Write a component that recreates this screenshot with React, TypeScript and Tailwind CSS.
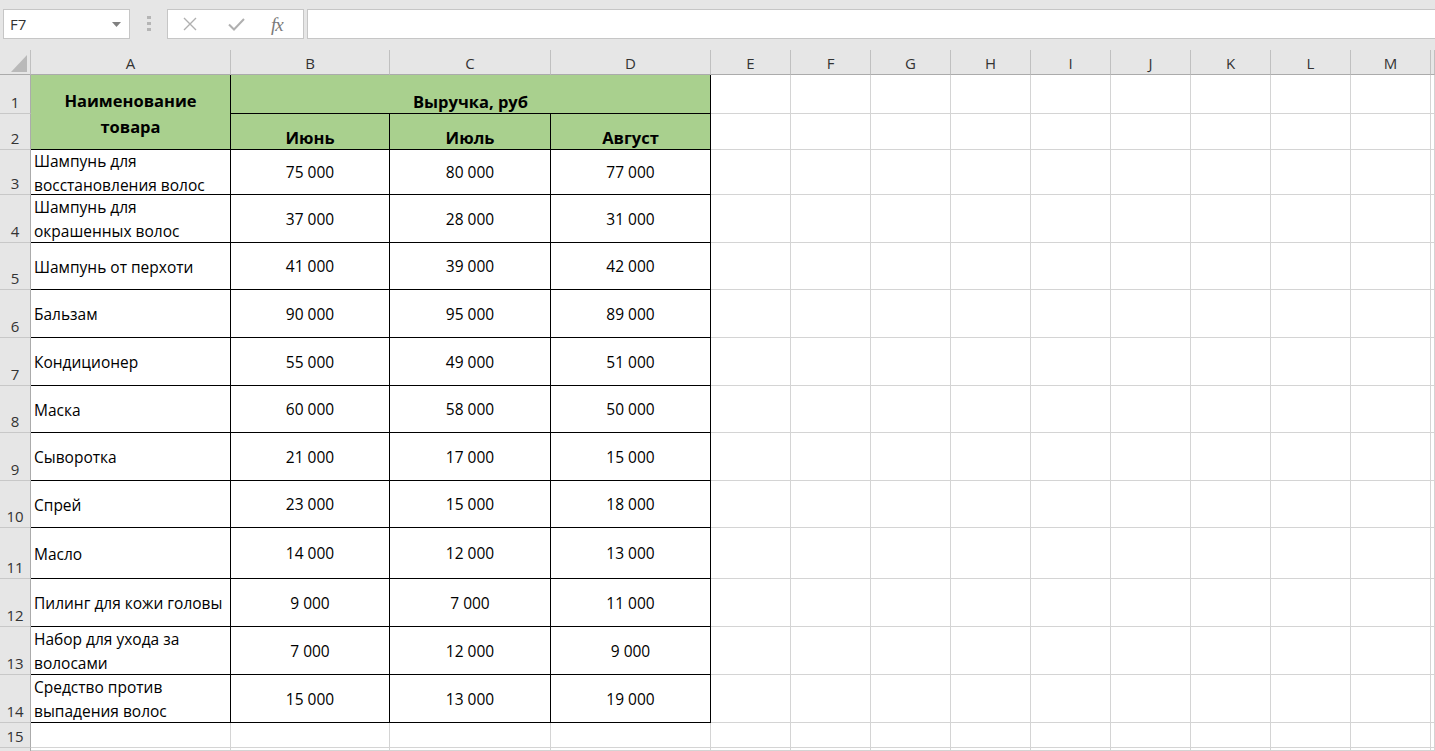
import React from "react";

const COL_LETTERS = ["A", "B", "C", "D", "E", "F", "G", "H", "I", "J", "K", "L", "M", ""];

const GRID = "border-r border-b border-[#d4d4d4]";
const TBL = "border-r border-b border-black";
const ROWHDR =
  "border-r border-b border-r-[#ababab] border-b-[#c8c8c8] bg-[#e6e6e6] flex items-end justify-center pb-[3px] text-[#333] text-[15px] leading-none";

type Row = { n: number; name: string[]; b: string; c: string; d: string };

const DATA: Row[] = [
  { n: 3, name: ["Шампунь для", "восстановления волос"], b: "75 000", c: "80 000", d: "77 000" },
  { n: 4, name: ["Шампунь для", "окрашенных волос"], b: "37 000", c: "28 000", d: "31 000" },
  { n: 5, name: ["Шампунь от перхоти"], b: "41 000", c: "39 000", d: "42 000" },
  { n: 6, name: ["Бальзам"], b: "90 000", c: "95 000", d: "89 000" },
  { n: 7, name: ["Кондиционер"], b: "55 000", c: "49 000", d: "51 000" },
  { n: 8, name: ["Маска"], b: "60 000", c: "58 000", d: "50 000" },
  { n: 9, name: ["Сыворотка"], b: "21 000", c: "17 000", d: "15 000" },
  { n: 10, name: ["Спрей"], b: "23 000", c: "15 000", d: "18 000" },
  { n: 11, name: ["Масло"], b: "14 000", c: "12 000", d: "13 000" },
  { n: 12, name: ["Пилинг для кожи головы"], b: "9 000", c: "7 000", d: "11 000" },
  { n: 13, name: ["Набор для ухода за", "волосами"], b: "7 000", c: "12 000", d: "9 000" },
  { n: 14, name: ["Средство против", "выпадения волос"], b: "15 000", c: "13 000", d: "19 000" },
];

function EmptyCells({ from, row }: { from: number; row: string }) {
  const cells = [];
  for (let i = from; i < 14; i++) {
    cells.push(<div key={`${row}-${i}`} className={GRID} />);
  }
  return <>{cells}</>;
}

function TopBar() {
  return (
    <div className="h-[50px] bg-[#e6e6e6] flex items-start pt-[9px] pl-[3px]">
      <div className="w-[127px] h-[30px] bg-white border border-[#c6c6c6] flex items-center justify-between pl-[6px] pr-[8px]">
        <span className="text-[15px] text-[#333] font-['Open_Sans',sans-serif] leading-none">F7</span>
        <svg width="9" height="5" viewBox="0 0 9 5">
          <polygon points="0,0 9,0 4.5,5" fill="#808080" />
        </svg>
      </div>
      <div className="ml-[17px] w-[4px] h-[30px] flex flex-col items-center pt-[7px] gap-[3px]">
        <div className="w-[4px] h-[3px] bg-[#b5b5b5]" />
        <div className="w-[4px] h-[3px] bg-[#b5b5b5]" />
        <div className="w-[4px] h-[3px] bg-[#b5b5b5]" />
      </div>
      <div className="ml-[16px] w-[137px] h-[30px] bg-white border border-[#c6c6c6] flex items-center">
        <svg className="ml-[15px]" width="14" height="14" viewBox="0 0 14 14">
          <path d="M1 1 L13 13 M13 1 L1 13" stroke="#b0b0b0" strokeWidth="1.4" fill="none" />
        </svg>
        <svg className="ml-[31px]" width="17" height="14" viewBox="0 0 17 14">
          <path d="M1 7.5 L6 12.5 L16 2" stroke="#b0b0b0" strokeWidth="2" fill="none" />
        </svg>
        <span className="ml-[26px] text-[19px] italic text-[#7a7a7a] font-['Liberation_Serif',serif] leading-none tracking-[-1px]">
          fx
        </span>
      </div>
      <div className="ml-[3px] flex-1 h-[30px] bg-white border-y border-l border-[#c6c6c6]" />
    </div>
  );
}

function Sheet() {
  const cells: React.ReactNode[] = [];

  cells.push(
    <div key="corner" className="border-r border-b border-r-[#c0c0c0] border-b-[#ababab] bg-[#e6e6e6] relative">
      <svg className="absolute left-0 top-0" width="30" height="24" viewBox="0 0 30 24">
        <polygon points="27,5 27,22 11,22" fill="#b9b9b9" />
      </svg>
    </div>
  );
  COL_LETTERS.forEach((l, i) => {
    cells.push(
      <div
        key={`ch-${i}`}
        className="border-r border-b border-r-[#c0c0c0] border-b-[#ababab] bg-[#e6e6e6] flex items-center justify-center pt-[3px] text-[#333] text-[15px] leading-none"
      >
        {l}
      </div>
    );
  });

  cells.push(
    <div key="rh1" className={ROWHDR}>
      1
    </div>
  );
  cells.push(
    <div
      key="a1"
      className={`${TBL} row-span-2 bg-[#a9d08e] flex items-center justify-center text-center font-bold text-[16.5px] leading-[26px] pt-[3px] text-black`}
    >
      Наименование
      <br />
      товара
    </div>
  );
  cells.push(
    <div
      key="b1"
      className={`${TBL} col-span-3 bg-[#a9d08e] flex items-end justify-center font-bold text-[16.5px] pb-[3px] leading-none text-black`}
    >
      Выручка, руб
    </div>
  );
  cells.push(<EmptyCells key="e1" from={4} row="r1" />);

  cells.push(
    <div key="rh2" className={ROWHDR}>
      2
    </div>
  );
  ["Июнь", "Июль", "Август"].forEach((m) => {
    cells.push(
      <div
        key={`h-${m}`}
        className={`${TBL} bg-[#a9d08e] flex items-end justify-center font-bold text-[16.5px] pb-[3px] leading-none text-black`}
      >
        {m}
      </div>
    );
  });
  cells.push(<EmptyCells key="e2" from={4} row="r2" />);

  DATA.forEach((r) => {
    cells.push(
      <div key={`rh${r.n}`} className={ROWHDR}>
        {r.n}
      </div>
    );
    cells.push(
      <div
        key={`a${r.n}`}
        className={`${TBL} flex items-center pl-[3px] pt-[1px] leading-[24px] whitespace-nowrap text-black`}
      >
        <div>
          {r.name.map((t, i) => (
            <div key={i}>{t}</div>
          ))}
        </div>
      </div>
    );
    [r.b, r.c, r.d].forEach((v, i) => {
      cells.push(
        <div key={`v${r.n}-${i}`} className={`${TBL} flex items-center justify-center pt-[2px] text-black`}>
          {v}
        </div>
      );
    });
    cells.push(<EmptyCells key={`e${r.n}`} from={4} row={`r${r.n}`} />);
  });

  cells.push(
    <div key="rh15" className={ROWHDR}>
      15
    </div>
  );
  cells.push(<EmptyCells key="e15" from={0} row="r15" />);
  cells.push(<div key="rh16" className="border-r border-r-[#ababab] bg-[#e6e6e6]" />);
  cells.push(<EmptyCells key="e16" from={0} row="r16" />);

  return (
    <div className="grid h-[701px] grid-cols-[31px_200px_159px_161px_160px_80px_80px_80px_80px_80px_80px_80px_80px_80px_1fr] grid-rows-[25px_39px_36px_45px_48px_47px_48px_48px_47px_48px_47px_51px_48px_48px_48px_25px_1fr]">
      {cells}
    </div>
  );
}

export default function App() {
  return (
    <div className="w-[1435px] h-[751px] overflow-hidden bg-white font-['Open_Sans','Noto_Sans',sans-serif] text-[15.5px]">
      <TopBar />
      <Sheet />
    </div>
  );
}
